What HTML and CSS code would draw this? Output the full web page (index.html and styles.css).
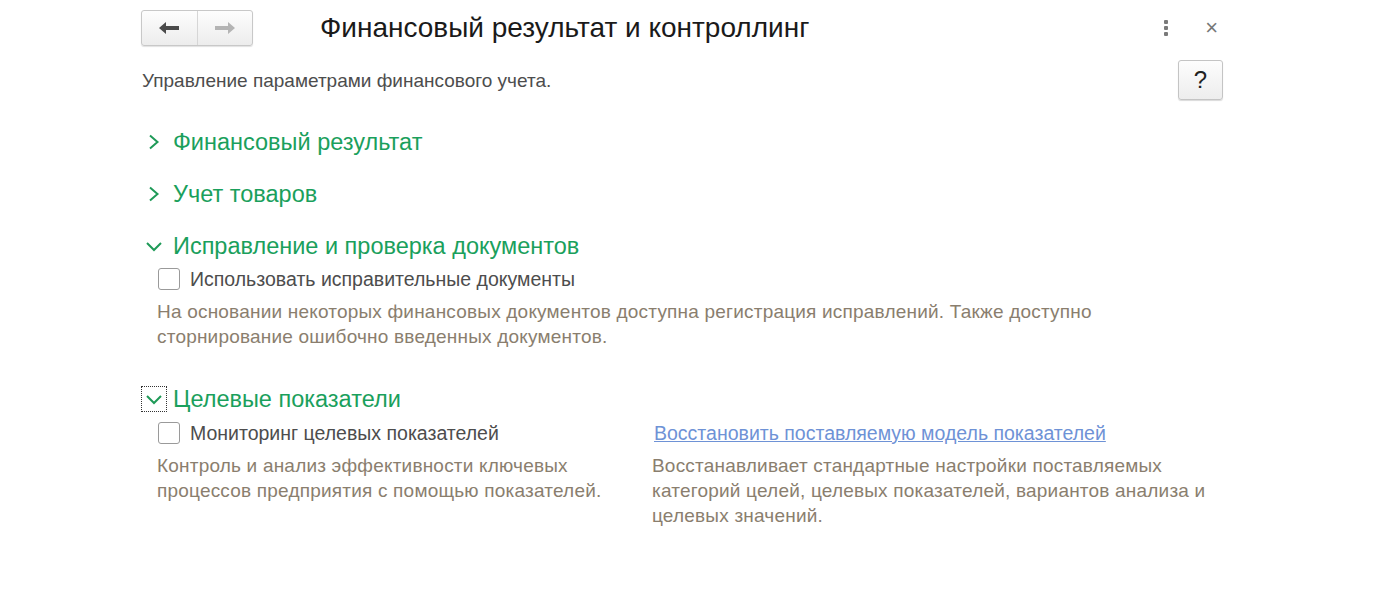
FILE: index.html
```html
<!DOCTYPE html>
<html>
<head>

    <meta charset="UTF-8">
    <title>Финансовый результат и контроллинг</title>

    <link rel="stylesheet" href="styles.css">

</head>
<body>

    <div class="form">

        <div class="header">
            <div class="nav">
                <span class="nav-btn">
                    <svg width="22" height="14" viewBox="0 0 22 14"><path d="M1 7 L8 1 L8 5 L21 5 L21 9 L8 9 L8 13 Z" fill="#4a4a4a"/></svg>
                </span>
                <span class="nav-btn">
                    <svg width="22" height="14" viewBox="0 0 22 14"><path d="M21 7 L14 1 L14 5 L1 5 L1 9 L14 9 L14 13 Z" fill="#b4b4b4"/></svg>
                </span>
            </div>
            <h1>Финансовый результат и контроллинг</h1>
            <div class="window-tools">
                <span class="more">
                    <i></i><i></i><i></i>
                </span>
                <span class="close">&times;</span>
            </div>
        </div>

        <div class="intro">
            <p>Управление параметрами финансового учета.</p>
            <span class="help">?</span>
        </div>

        <div class="group collapsed">
            <div class="group-title">
                <span class="chevron"><svg width="14" height="16" viewBox="0 0 14 16"><path d="M3 1.5 L10.5 8 L3 14.5" fill="none" stroke="#1f9a58" stroke-width="2"/></svg></span>
                Финансовый результат
            </div>
        </div>

        <div class="group collapsed">
            <div class="group-title">
                <span class="chevron"><svg width="14" height="16" viewBox="0 0 14 16"><path d="M3 1.5 L10.5 8 L3 14.5" fill="none" stroke="#1f9a58" stroke-width="2"/></svg></span>
                Учет товаров
            </div>
        </div>

        <div class="group">
            <div class="group-title">
                <span class="chevron"><svg width="16" height="14" viewBox="0 0 16 14"><path d="M1 4 L8 11 L15 4" fill="none" stroke="#1f9a58" stroke-width="2"/></svg></span>
                Исправление и проверка документов
            </div>
            <div class="group-body">
                <label class="check">
                    <span class="box"></span>
                    <span>Использовать исправительные документы</span>
                </label>
                <p class="note wide">На основании некоторых финансовых документов доступна регистрация исправлений. Также доступно сторнирование ошибочно введенных документов.</p>
            </div>
        </div>

        <div class="group last">
            <div class="group-title">
                <span class="chevron focused"><svg width="16" height="14" viewBox="0 0 16 14"><path d="M1 4 L8 11 L15 4" fill="none" stroke="#1f9a58" stroke-width="2"/></svg></span>
                Целевые показатели
            </div>
            <div class="group-body columns">
                <div class="col">
                    <label class="check">
                        <span class="box"></span>
                        <span>Мониторинг целевых показателей</span>
                    </label>
                    <p class="note">Контроль и анализ эффективности ключевых процессов предприятия с помощью показателей.</p>
                </div>
                <div class="col">
                    <a href="#" class="link">Восстановить поставляемую модель показателей</a>
                    <p class="note">Восстанавливает стандартные настройки поставляемых категорий целей, целевых показателей, вариантов анализа и целевых значений.</p>
                </div>
            </div>
        </div>

    </div>

</body>
</html>
```

FILE: styles.css
```css
html {
    box-sizing: border-box;
}

*,
*:before,
*:after {
    box-sizing: inherit;
}

body {
    margin: 0;
    background: #fff;
    font-family: "Liberation Sans", Arial, sans-serif;
    color: #4d4d4d;
}

.form {
    width: 1082px;
    margin: 0 0 0 141px;
    padding-top: 10px;
}

/* header */

.header {
    display: flex;
    align-items: center;
    height: 36px;
}

.nav {
    display: flex;
    width: 112px;
    height: 36px;
    border: 1px solid #c8c8c8;
    border-radius: 3px;
    background: linear-gradient(#fdfdfd, #ececec);
    box-shadow: 0 1px 1px rgba(0, 0, 0, .12);
}

.nav-btn {
    flex: 1;
    display: flex;
    align-items: center;
    justify-content: center;
}

.nav-btn + .nav-btn {
    border-left: 1px solid #d6d6d6;
}

h1 {
    margin: 0 0 0 67px;
    font-size: 28px;
    font-weight: normal;
    color: #1a1a1a;
    flex: 1;
}

.window-tools {
    display: flex;
    align-items: center;
    gap: 37px;
    margin-right: 5px;
}

.more {
    display: flex;
    flex-direction: column;
    gap: 2px;
}

.more i {
    display: block;
    width: 4px;
    height: 4px;
    border-radius: 1px;
    background: #7a7a7a;
}

.close {
    font-size: 22px;
    color: #777;
    line-height: 1;
}

/* intro */

.intro {
    display: flex;
    align-items: center;
    justify-content: space-between;
    margin-top: 14px;
    height: 40px;
}

.intro p {
    margin: 1px 0 0 1px;
    font-size: 19px;
}

.help {
    width: 45px;
    height: 40px;
    border: 1px solid #c4c4c4;
    border-radius: 3px;
    background: linear-gradient(#fdfdfd, #ededed);
    box-shadow: 0 1px 1px rgba(0, 0, 0, .15);
    font-size: 24px;
    color: #222;
    display: flex;
    align-items: center;
    justify-content: center;
}

/* groups */

.group {
    margin-top: 22px;
}

.intro + .group {
    margin-top: 27px;
}

.group.last {
    margin-top: 35px;
}

.group-title {
    display: flex;
    align-items: center;
    height: 30px;
    font-size: 23.5px;
    color: #1aa05c;
}

.chevron {
    width: 26px;
    height: 26px;
    margin-right: 6px;
    display: flex;
    align-items: center;
    justify-content: center;
    border: 1px solid transparent;
}

.chevron.focused {
    border: 1px dotted #333;
}

.group-body {
    padding-left: 16px;
    padding-top: 5px;
}

.last .group-body {
    padding-top: 6px;
}

.check {
    display: flex;
    align-items: center;
    height: 26px;
    font-size: 19.5px;
    color: #4d4d4d;
}

.box {
    width: 22px;
    height: 22px;
    border: 1px solid #9a9a9a;
    border-radius: 3px;
    background: #fff;
    margin: 0 10px 0 1px;
}

.note {
    margin: 7px 0 0;
    font-size: 19px;
    letter-spacing: .2px;
    line-height: 25px;
    color: #8a7e6e;
}

.note.wide {
    max-width: 1000px;
}

.columns {
    display: flex;
}

.col:first-child {
    width: 495px;
}

.col:first-child .note {
    max-width: 460px;
}

.col:last-child {
    width: 570px;
}

.col:last-child .note {
    max-width: 560px;
}

.link {
    display: block;
    height: 26px;
    line-height: 26px;
    margin-left: 2px;
    font-size: 19.5px;
    color: #6e92d6;
}
```
